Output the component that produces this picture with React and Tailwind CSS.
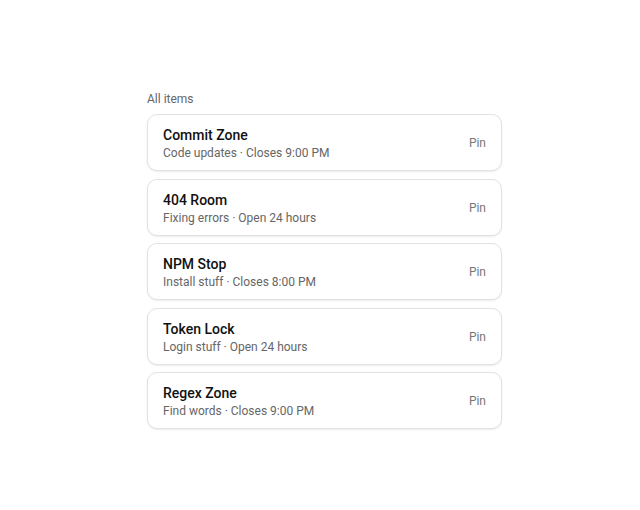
const items = [
  { name: "Commit Zone", desc: "Code updates · Closes 9:00 PM" },
  { name: "404 Room", desc: "Fixing errors · Open 24 hours" },
  { name: "NPM Stop", desc: "Install stuff · Closes 8:00 PM" },
  { name: "Token Lock", desc: "Login stuff · Open 24 hours" },
  { name: "Regex Zone", desc: "Find words · Closes 9:00 PM" },
];

export default function App() {
  return (
    <div
      className="min-h-screen bg-white pt-[91px]"
      style={{ fontFamily: "Roboto, 'Noto Sans', sans-serif" }}
    >
      <div className="ml-[147px] w-[355px]">
        <div className="mb-[7px] text-[12px] leading-4 text-[#666]">All items</div>
        <ul className="flex flex-col gap-[7.5px]">
          {items.map((it) => (
            <li
              key={it.name}
              className="flex items-center justify-between rounded-[10px] border border-[#e2e2e2] bg-white pt-[10px] pb-[9px] pl-[15px] pr-[15px] shadow-[0_1px_2px_rgba(0,0,0,0.08)]"
            >
              <div>
                <div className="text-[14px] font-medium leading-5 text-[#111]">{it.name}</div>
                <div className="text-[12px] leading-4 text-[#666]">{it.desc}</div>
              </div>
              <button className="text-[12px] text-[#777]">Pin</button>
            </li>
          ))}
        </ul>
      </div>
    </div>
  );
}
